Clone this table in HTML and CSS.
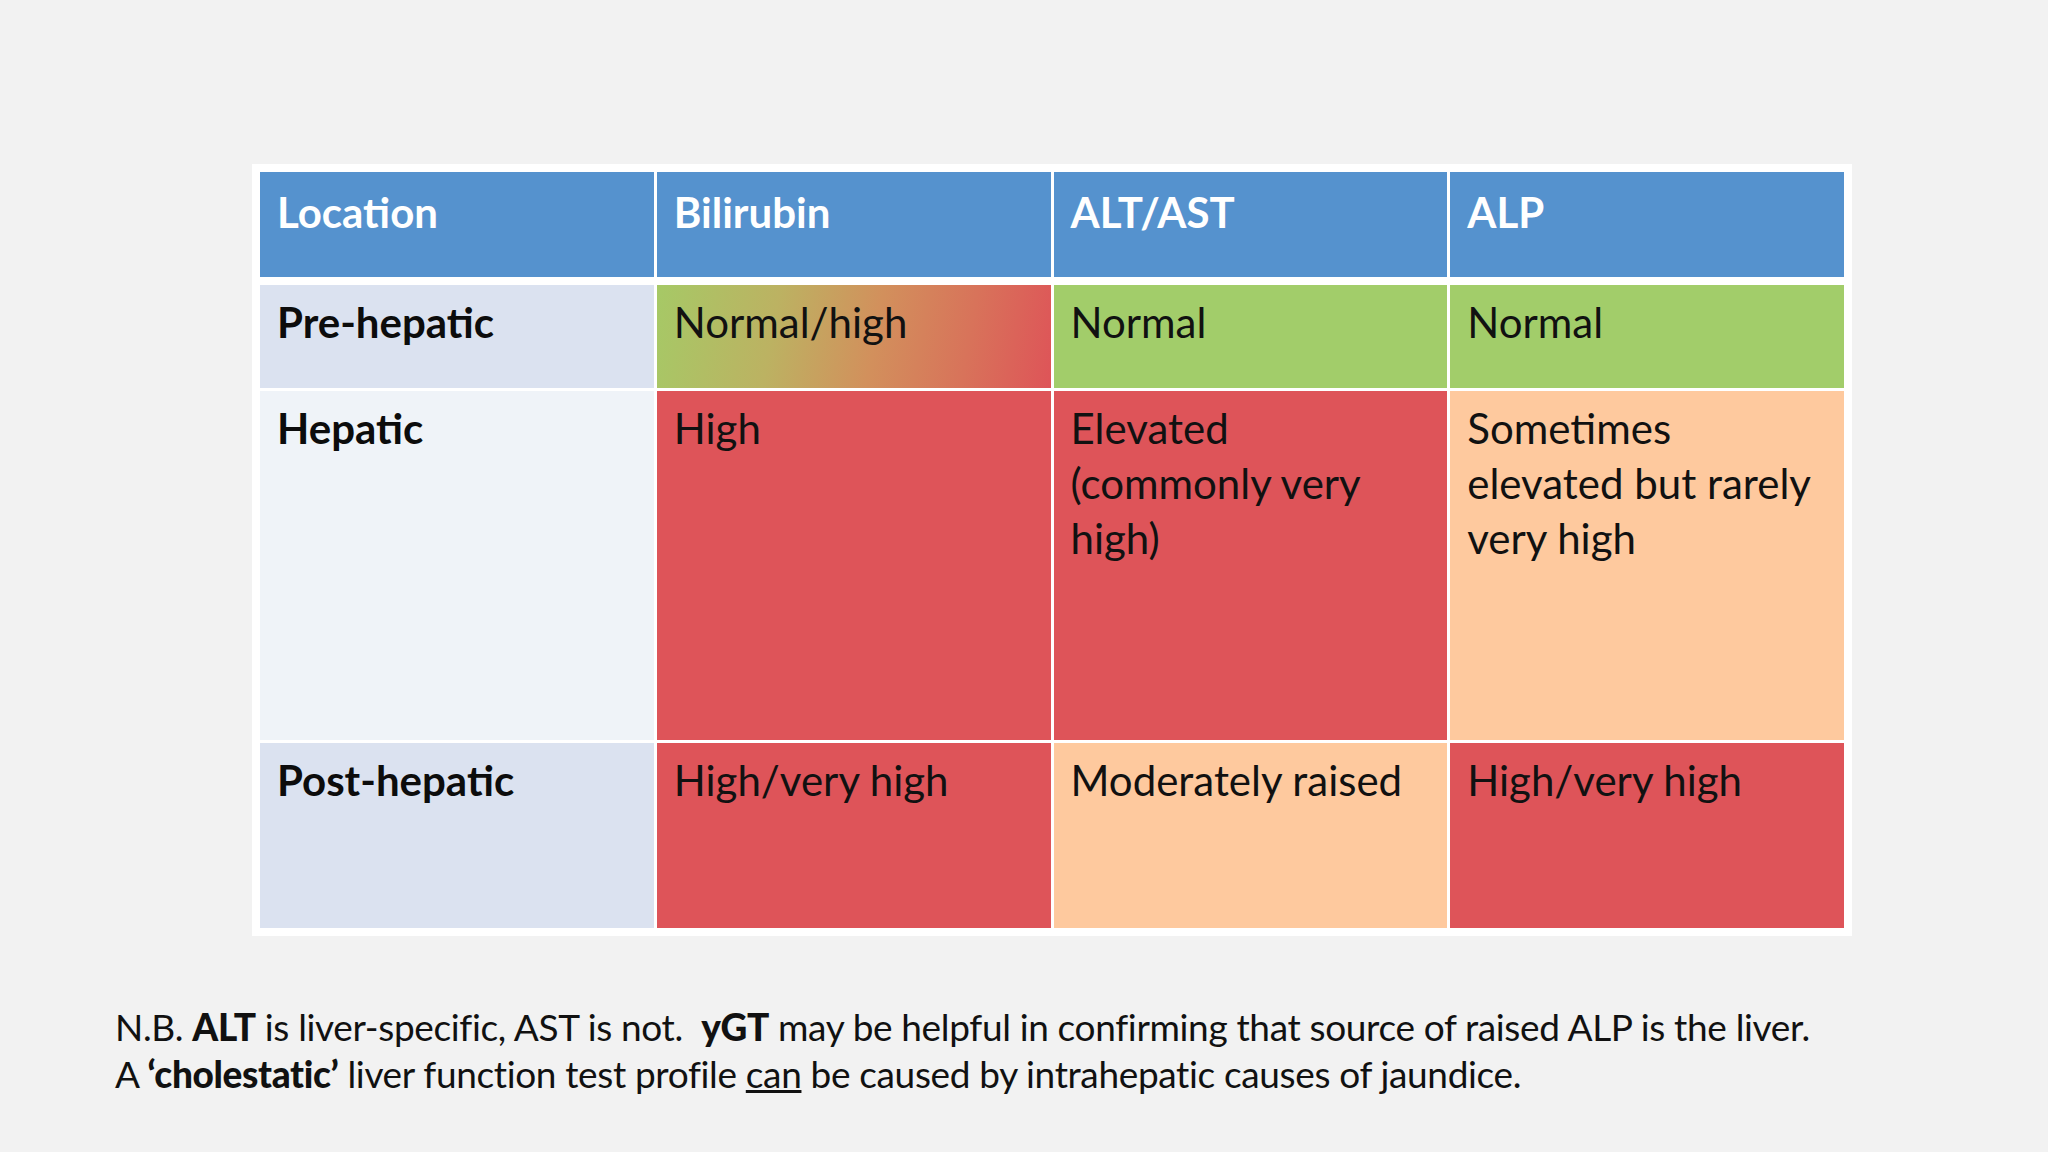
FILE: index.html
```html
<!DOCTYPE html>
<html>
<head>
<meta charset="utf-8">
<link rel="stylesheet" href="styles.css">
</head>
<body>
<div class="slide">
  <div class="frame">
    <div class="grid">
      <div class="cell head">Location</div>
      <div class="cell head">Bilirubin</div>
      <div class="cell head">ALT/AST</div>
      <div class="cell head">ALP</div>

      <div class="cell label dark">Pre-hepatic</div>
      <div class="cell mixed">Normal/high</div>
      <div class="cell green">Normal</div>
      <div class="cell green">Normal</div>

      <div class="cell label light">Hepatic</div>
      <div class="cell red">High</div>
      <div class="cell red">Elevated<br>(commonly very<br>high)</div>
      <div class="cell peach">Sometimes<br>elevated but rarely<br>very high</div>

      <div class="cell label dark">Post-hepatic</div>
      <div class="cell red">High/very high</div>
      <div class="cell peach">Moderately raised</div>
      <div class="cell red">High/very high</div>
    </div>
  </div>
  <div class="note">
    <p>N.B. <b>ALT</b> is liver-specific, AST is not.&nbsp; <b>yGT</b> may be helpful in confirming that source of raised ALP is the liver.</p>
    <p>A <b>‘cholestatic’</b> liver function test profile <u>can</u> be caused by intrahepatic causes of jaundice.</p>
  </div>
</div>
</body>
</html>
```

FILE: styles.css
```css
html, body {
  margin: 0;
  padding: 0;
}
body {
  width: 2048px;
  height: 1152px;
  background: #f2f2f2;
  overflow: hidden;
}
.slide {
  padding: 164px 0 0 115px;
}
.frame {
  margin-left: 137px;
  width: 1600px;
  box-sizing: border-box;
  background: #ffffff;
  padding: 8px;
}
.grid {
  display: grid;
  grid-template-columns: repeat(4, 1fr);
  grid-template-rows: 110px 103px 349px 185px;
  column-gap: 3px;
  row-gap: 3px;
}
.cell {
  font-family: Lato, "Open Sans", sans-serif;
  font-size: 42px;
  line-height: 55px;
  padding: 10px 10px 0 17px;
  color: #111111;
  white-space: nowrap;
  overflow: hidden;
}
.head {
  background: #5592ce;
  color: #ffffff;
  font-weight: 700;
  margin-bottom: 5px;
  padding-top: 13px;
}
.label {
  font-weight: 700;
  color: #0c0c0c;
}
.dark {
  background: #dbe2f0;
}
.light {
  background: #eff3f8;
}
.green {
  background: #a2cd6a;
}
.red {
  background: #de5459;
}
.peach {
  background: #fec99e;
}
.mixed {
  background: linear-gradient(100deg, #a6c966 0%, #bcb262 30%, #d2905c 55%, #d8735a 78%, #de5458 100%);
}
.note {
  margin-top: 68px;
  font-family: Lato, "Open Sans", sans-serif;
  font-size: 37px;
  letter-spacing: -0.35px;
  line-height: 46.5px;
  color: #111111;
}
.note p {
  margin: 0;
  white-space: nowrap;
}
.note b {
  font-weight: 900;
}
```
